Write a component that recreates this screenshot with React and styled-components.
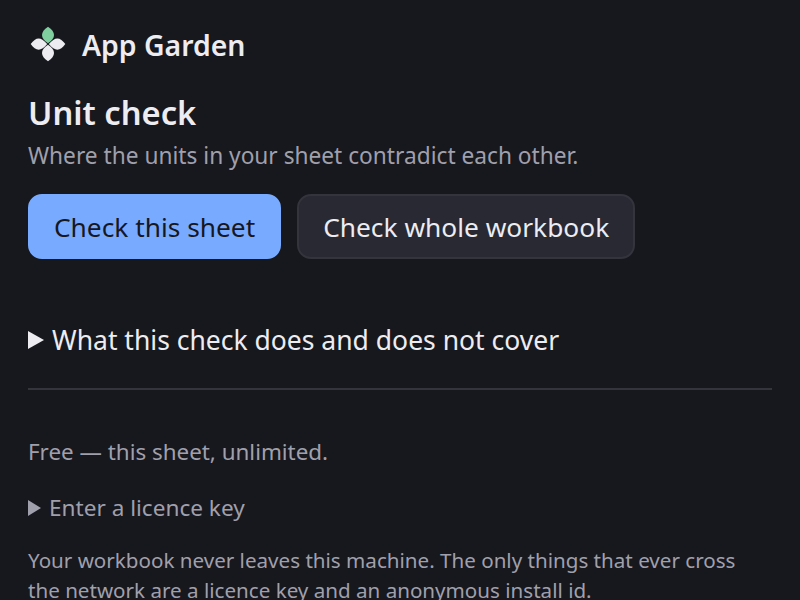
import React from "react";
import styled, { createGlobalStyle } from "styled-components";

const Global = createGlobalStyle`
  html, body { margin: 0; padding: 0; background: #17171e; height: 100%; overflow: hidden; }
  body { font-family: "Noto Sans", "Open Sans", sans-serif; color: #ececf1; }
`;
const Page = styled.main`
  padding: 24px 28px;
  display: flex;
  flex-direction: column;
`;
const Brand = styled.header`
  display: flex;
  align-items: center;
  gap: 14px;
  height: 44px;
`;
const BrandName = styled.span`
  font-size: 28.4px;
  font-weight: 600;
  line-height: 40px;
  margin-top: -2px;
  color: #ececf1;
`;
const Title = styled.h1`
  font-size: 32.7px;
  font-weight: 600;
  line-height: 40px;
  margin: 25px 0 0;
`;
const Lead = styled.p`
  font-size: 22.7px;
  line-height: 32px;
  margin: 7px 0 0;
  color: #a0a0ac;
`;
const Actions = styled.div`
  display: flex;
  gap: 16px;
  margin-top: 22px;
`;
const Button = styled.button`
  font: inherit;
  font-size: 26.3px;
  height: 65px;
  padding: 0 24px;
  border-radius: 14px;
  border: 2px solid ${p => (p.$primary ? "#78abff" : "#33343c")};
  background: ${p => (p.$primary ? "#78abff" : "#282932")};
  color: ${p => (p.$primary ? "#17171e" : "#ececf1")};
`;
const Summary = styled.summary`
  display: flex;
  align-items: center;
  gap: ${p => p.$gap}px;
  list-style: none;
  &::-webkit-details-marker { display: none; }
  &::before {
    content: "";
    flex: none;
    border-style: solid;
    border-color: transparent transparent transparent currentColor;
    border-width: ${p => p.$h / 2}px 0 ${p => p.$h / 2}px ${p => p.$w}px;
  }
`;
const Disclosure = styled.details`
  font-size: 26.5px;
  line-height: 36px;
  margin-top: 63px;
  color: #ececf1;
`;
const Rule = styled.hr`
  border: 0;
  height: 2px;
  background: #33343c;
  margin: 30px 0 0;
`;
const Note = styled.p`
  font-size: 22.4px;
  line-height: 32px;
  margin: 46px 0 0;
  color: #a0a0ac;
`;
const KeyDisclosure = styled.details`
  font-size: 22.6px;
  line-height: 32px;
  margin-top: 24px;
  color: #a0a0ac;
`;
const Privacy = styled.p`
  font-size: 20.6px;
  line-height: 30px;
  margin: 21px 0 0;
  color: #a0a0ac;
`;

const Logo = () => (
  <svg width="40" height="40" viewBox="0 0 40 40" aria-hidden="true">
    <path d="M20 .7 C28 6 28 12 20 17.200 C12 12 12 6 20 .7Z" fill="#7fcf9f" />
    <path d="M20 18.800 C28 24 28 30 20 35.300 C12 30 12 24 20 18.800Z" fill="#ececf1" />
    <path d="M2.700 18 C8 10.500 13 10.500 19.200 18 C13 25.500 8 25.500 2.700 18Z" fill="#ececf1" />
    <path d="M37.300 18 C32 10.500 27 10.500 20.800 18 C27 25.500 32 25.500 37.300 18Z" fill="#ececf1" />
  </svg>
);

export default function App() {
  return (
    <Page>
      <Global />
      <Brand>
        <Logo />
        <BrandName>App Garden</BrandName>
      </Brand>
      <Title>Unit check</Title>
      <Lead>Where the units in your sheet contradict each other.</Lead>
      <Actions>
        <Button $primary>Check this sheet</Button>
        <Button>Check whole workbook</Button>
      </Actions>
      <Disclosure>
        <Summary $w={16} $h={19} $gap={8}>What this check does and does not cover</Summary>
      </Disclosure>
      <Rule />
      <Note>Free — this sheet, unlimited.</Note>
      <KeyDisclosure>
        <Summary $w={13} $h={16} $gap={8}>Enter a licence key</Summary>
      </KeyDisclosure>
      <Privacy>
        Your workbook never leaves this machine. The only things that ever cross the network are a licence key and an anonymous install id.
      </Privacy>
    </Page>
  );
}
